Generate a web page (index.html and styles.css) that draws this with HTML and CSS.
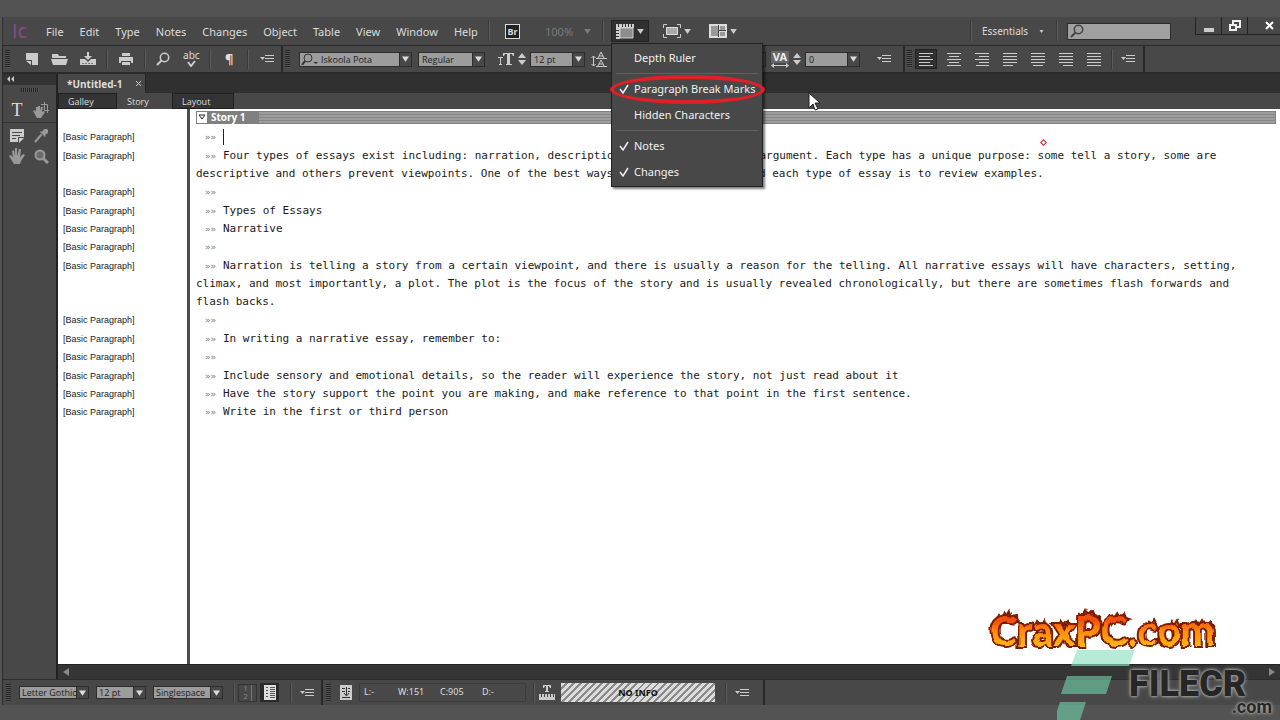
FILE: index.html
```html
<!DOCTYPE html>
<html lang="en">
<head>
    <meta charset="UTF-8">
    <meta name="viewport" content="width=device-width, initial-scale=1.0">
    <title>Untitled-1</title>
    <link rel="stylesheet" href="styles.css">
</head>
<body>
    <!-- shared icons -->
    <svg width="0" height="0" class="defs">
        <symbol id="down" viewBox="0 0 8 6"><path d="M0 0h8L4 6z"/></symbol>
        <symbol id="panel-menu" viewBox="0 0 14 10"><path d="M0 3h5L2.500 6z"/><path d="M5 1.500h9M5 4.500h9M5 7.500h9" stroke="currentColor" fill="none"/></symbol>
        <symbol id="glass" viewBox="0 0 14 14"><circle cx="8.500" cy="5.500" r="4.200" fill="none" stroke="currentColor" stroke-width="1.500"/><path d="M5.500 8.500L1 13" stroke="currentColor" stroke-width="2"/></symbol>
        <symbol id="spin" viewBox="0 0 8 12"><path d="M0 5l4-5 4 5zM0 7h8l-4 5z"/></symbol>
        <symbol id="check" viewBox="0 0 10 10"><path d="M1 5l3 4 5-8" fill="none" stroke="currentColor" stroke-width="1.500"/></symbol>
    </svg>

    <header class="menubar">
        <span class="logo">Ic</span>
        <nav class="menus">
            <a href="#">File</a>
            <a href="#">Edit</a>
            <a href="#">Type</a>
            <a href="#">Notes</a>
            <a href="#">Changes</a>
            <a href="#">Object</a>
            <a href="#">Table</a>
            <a href="#">View</a>
            <a href="#">Window</a>
            <a href="#">Help</a>
        </nav>
        <i class="sep"></i>
        <button class="bridge">Br</button>
        <button class="zoom">100% <svg class="caret"><use href="#down"/></svg></button>
        <i class="sep"></i>
        <div class="view-options">
            <button class="view-btn open" aria-label="View options">
                <svg width="18" height="15"><path d="M4 4h13v10H4z" fill="#8d8d8d" stroke="#ccc"/><path d="M0 0h18v4H4v11H0z" fill="#d0d0d0"/><path d="M6.500 0v3M9.500 0v3M12.500 0v3M15.500 0v3M0 6.500h3M0 9.500h3M0 12.500h3M2.500 0v3" stroke="#333"/></svg>
                <svg class="caret"><use href="#down"/></svg>
            </button>
            <ul class="dropdown">
                <li>Depth Ruler</li>
                <li class="line"></li>
                <li class="marked"><svg class="check"><use href="#check"/></svg>Paragraph Break Marks</li>
                <li>Hidden Characters</li>
                <li class="line"></li>
                <li><svg class="check"><use href="#check"/></svg>Notes</li>
                <li><svg class="check"><use href="#check"/></svg>Changes</li>
            </ul>
        </div>
        <button class="view-btn" aria-label="Screen mode">
            <svg width="18" height="14"><path d="M3.500 3.500h11v7h-11z" fill="#aaa" stroke="#ddd"/><path d="M.5 4V.5H4M14 .5h3.500V4M17.500 10v3.500H14M4 13.500H.5V10" fill="none" stroke="#ccc"/></svg>
            <svg class="caret"><use href="#down"/></svg>
        </button>
        <button class="view-btn" aria-label="Arrange documents">
            <svg width="18" height="14"><path d="M0 0h18v14H0z" fill="#ddd"/><path d="M2 2h7v10H2zM11 2h5v4h-5zM11 8h5v4h-5z" fill="#999"/><path d="M9.500 1v12M10 6.500h7" stroke="#444"/></svg>
            <svg class="caret"><use href="#down"/></svg>
        </button>
        <div class="right">
            <i class="sep"></i>
            <button class="workspace">Essentials <svg class="caret small"><use href="#down"/></svg></button>
            <i class="sep"></i>
            <label class="search">
                <svg width="14" height="14"><use href="#glass"/></svg>
                <input type="text" aria-label="Search">
            </label>
            <div class="window-buttons">
                <button aria-label="Minimize"><svg width="10" height="12"><path d="M0 8h10v4H0z"/></svg></button>
                <button aria-label="Restore"><svg width="12" height="12" stroke="#eee" stroke-width="2"><path d="M4 4V1h7v6H8M1 5h6v5H1z" fill="none"/></svg></button>
                <button aria-label="Close" class="close"><svg width="9" height="9" stroke="#fff" stroke-width="2"><path d="M1 1l7 7M8 1L1 8"/></svg></button>
            </div>
        </div>
    </header>

    <div class="toolbar">
        <i class="grip"></i>
        <div class="tools">
            <button aria-label="New"><svg width="12" height="12"><path d="M0 0h12v12H6V7H0zM0 8h5v4z"/></svg></button>
            <button aria-label="Open"><svg width="17" height="12"><path d="M1 1h6l1 2h7v2H1zM0 6h17l-2 6H2z"/></svg></button>
            <button aria-label="Save"><svg width="16" height="14"><path d="M0 7h5l3 3 3-3h5v6H0zM7 0h2v4h3L8 8 4 4h3z"/><path d="M2 11.500h12" stroke="#777" stroke-dasharray="2 1"/></svg></button>
            <i class="sep"></i>
            <button aria-label="Print"><svg width="14" height="12"><path d="M3 0h8v3H3zM0 4h14v6h-2V8H2v2H0zM3 9h8v3H3z"/></svg></button>
            <i class="sep"></i>
            <button aria-label="Find"><svg width="14" height="14"><use href="#glass"/></svg></button>
            <button aria-label="Check spelling" class="abc">abc<svg width="9" height="7"><path d="M1 2l3 4 4-5" fill="none" stroke="#ccc" stroke-width="2"/></svg></button>
            <i class="sep"></i>
            <button aria-label="Show hidden characters" class="pilcrow">¶</button>
            <i class="sep"></i>
            <button aria-label="Options"><svg width="14" height="10"><use href="#panel-menu"/></svg></button>
        </div>
        <i class="edge"></i>
        <i class="grip"></i>
        <div class="type-tools">
            <label class="combo font"><svg class="lens" width="17" height="12"><circle cx="7" cy="5" r="4" fill="none" stroke="#333"/><path d="M4 8l-3 4" stroke="#333" stroke-width="2"/><path d="M12 9h5l-2 2z" fill="#333"/></svg><select aria-label="Font"><option>Iskoola Pota</option></select><span class="arrow"><svg><use href="#down"/></svg></span></label>
            <label class="combo weight"><select aria-label="Font style"><option>Regular</option></select><span class="arrow"><svg><use href="#down"/></svg></span></label>
            <svg class="type-icon" width="16" height="14"><path d="M5 1h11v3h-1l-1-2h-2v10h2v1h-6v-1h1V2H7L6 4H5zM0 5h5v1H3v6h1v1H1v-1h1V6H0z"/></svg>
            <svg class="spinner"><use href="#spin"/></svg>
            <label class="combo size"><select aria-label="Font size"><option>12 pt</option></select><span class="arrow"><svg><use href="#down"/></svg></span></label>
            <svg class="leading-icon" width="16" height="16" stroke="#ccc"><path d="M7 7l3-6 3 6M8 5h4M7 15l3-6 3 6M8 13h4M5 7.500h11M5 15.500h11M2.500 5v10M.5 7l2-2 2 2M.5 13l2 2 2-2" fill="none"/></svg>
            <svg class="spinner"><use href="#spin"/></svg>
            <label class="combo leading"><select aria-label="Leading"><option>14.4 pt</option></select><span class="arrow"><svg><use href="#down"/></svg></span></label>
            <span class="tracking-icon"><b>VA</b><svg width="18" height="5"><path d="M0 2.500L3 0v2h12V0l3 2.500L15 5V3H3v2z"/></svg></span>
            <svg class="spinner"><use href="#spin"/></svg>
            <label class="combo tracking"><select aria-label="Tracking"><option>0</option></select><span class="arrow"><svg><use href="#down"/></svg></span></label>
            <button aria-label="Options"><svg width="14" height="10"><use href="#panel-menu"/></svg></button>
        </div>
        <i class="edge"></i>
        <i class="grip"></i>
        <div class="align-tools">
            <button class="on" aria-label="Align left"><svg><path d="M0 .5h14M0 3.500h11M0 6.500h14M0 9.500h11M0 12.500h14"/></svg></button>
            <button aria-label="Align center"><svg><path d="M0 .5h14M2 3.500h10M0 6.500h14M2 9.500h10M0 12.500h14"/></svg></button>
            <button aria-label="Align right"><svg><path d="M0 .5h14M4 3.500h10M0 6.500h14M4 9.500h10M1 12.500h13"/></svg></button>
            <button aria-label="Justify left"><svg><path d="M0 .5h14M0 3.500h14M0 6.500h14M0 9.500h14M0 12.500h10"/></svg></button>
            <button aria-label="Justify center"><svg><path d="M0 .5h14M0 3.500h14M0 6.500h14M0 9.500h14M2 12.500h10"/></svg></button>
            <button aria-label="Justify right"><svg><path d="M0 .5h14M0 3.500h14M0 6.500h14M0 9.500h14M4 12.500h10"/></svg></button>
            <button aria-label="Justify all"><svg><path d="M0 .5h14M0 3.500h14M0 6.500h14M0 9.500h14M0 12.500h14"/></svg></button>
            <i class="sep"></i>
            <button class="opts" aria-label="Options"><svg class="pm"><use href="#panel-menu"/></svg></button>
        </div>
        <i class="edge"></i>
    </div>

    <div class="main">
        <aside class="toolbox">
            <div class="collapse"><svg width="8" height="6"><path d="M3 0v6L0 3zM7 0v6L4 3z"/></svg></div>
            <i class="grip-h"></i>
            <div class="tool-grid">
                <button class="type-tool" aria-label="Type">T</button>
                <button aria-label="Position"><svg width="16" height="16"><path d="M0 9l2-1 1 2V5h2v4V4h2v5l1-4h2l-1 5 2-1 1 1-4 6H4z" fill="#999"/><path d="M8 2.500h6.500V11M11.500 0v8.500H16" fill="none" stroke="#999"/></svg></button>
            </div>
            <div class="tool-grid">
                <button aria-label="Note"><svg width="14" height="14"><path d="M0 0h14v8H8v5H0zM9 9h5l-5 5z"/><path d="M2 3.500h10M2 6.500h8M2 9.500h4" stroke="#484848"/></svg></button>
                <button aria-label="Eyedropper"><svg width="14" height="14"><path d="M10 0h3l1 1v3l-3 2 1 1-1 1-5-5 1-1 1 1z" fill="#999"/><path d="M7.500 5.500L1 13" stroke="#999" stroke-width="2"/></svg></button>
                <button aria-label="Hand"><svg width="16" height="16"><path d="M0 8l2-1 2 3L3 3l2-1 1 6V0h2v8l2-7h2l-1 8 3-3 2 1-4 6-1 3H5z" fill="#999"/></svg></button>
                <button aria-label="Zoom"><svg width="15" height="15" stroke="#999"><circle cx="6" cy="6" r="4.500" stroke-width="2" fill="#6c6c6c"/><path d="M9 9l5 5" stroke-width="3"/></svg></button>
            </div>
        </aside>

        <section class="document">
            <div class="doc-tabs"><a href="#">*Untitled-1 <svg width="7" height="7" stroke="#ccc"><path d="M1 1l5 5M6 1L1 6"/></svg></a></div>
            <div class="view-tabs">
                <button>Galley</button>
                <button class="active">Story</button>
                <button>Layout</button>
            </div>
            <div class="editor">
                <div class="row head"><div class="style"></div><div class="story"><span class="fold"><svg width="8" height="7"><path d="M1 1h6L4 5z" fill="none" stroke="#222"/></svg></span><b>Story 1</b></div></div>
                <div class="row empty"><div class="style">[Basic Paragraph]</div><p><i class="mark">»»</i><i class="cursor"></i></p></div>
                <div class="row"><div class="style">[Basic Paragraph]</div><p><i class="mark">»»</i>Four types of essays exist including: narration, description, persuasion, and an argument. Each type has a unique purpose: some tell a story, some are<br>descriptive and others prevent viewpoints. One of the best ways to properly understand each type of essay is to review examples.<span class="note"></span></p></div>
                <div class="row empty"><div class="style">[Basic Paragraph]</div><p><i class="mark">»»</i></p></div>
                <div class="row"><div class="style">[Basic Paragraph]</div><p><i class="mark">»»</i>Types of Essays</p></div>
                <div class="row"><div class="style">[Basic Paragraph]</div><p><i class="mark">»»</i>Narrative</p></div>
                <div class="row empty"><div class="style">[Basic Paragraph]</div><p><i class="mark">»»</i></p></div>
                <div class="row"><div class="style">[Basic Paragraph]</div><p><i class="mark">»»</i>Narration is telling a story from a certain viewpoint, and there is usually a reason for the telling. All narrative essays will have characters, setting,<br>climax, and most importantly, a plot. The plot is the focus of the story and is usually revealed chronologically, but there are sometimes flash forwards and<br>flash backs.</p></div>
                <div class="row empty"><div class="style">[Basic Paragraph]</div><p><i class="mark">»»</i></p></div>
                <div class="row"><div class="style">[Basic Paragraph]</div><p><i class="mark">»»</i>In writing a narrative essay, remember to:</p></div>
                <div class="row empty"><div class="style">[Basic Paragraph]</div><p><i class="mark">»»</i></p></div>
                <div class="row"><div class="style">[Basic Paragraph]</div><p><i class="mark">»»</i>Include sensory and emotional details, so the reader will experience the story, not just read about it</p></div>
                <div class="row"><div class="style">[Basic Paragraph]</div><p><i class="mark">»»</i>Have the story support the point you are making, and make reference to that point in the first sentence.</p></div>
                <div class="row"><div class="style">[Basic Paragraph]</div><p><i class="mark">»»</i>Write in the first or third person</p></div>
                <div class="row rest"><div class="style"></div></div>
            </div>
            <div class="scrollbar">
                <svg width="6" height="8"><path d="M6 0v8L0 4z"/></svg>
                <span><svg width="6" height="8"><path d="M0 0v8l6-4z"/></svg></span>
            </div>
        </section>
    </div>

    <footer class="status">
        <i class="grip"></i>
        <div class="galley-tools">
            <label class="combo face"><select aria-label="Display font"><option>Letter Gothic Std</option></select><span class="arrow"><svg><use href="#down"/></svg></span></label>
            <label class="combo pts"><select aria-label="Display size"><option>12 pt</option></select><span class="arrow"><svg><use href="#down"/></svg></span></label>
            <label class="combo spacing"><select aria-label="Line spacing"><option>Singlespace</option></select><span class="arrow"><svg><use href="#down"/></svg></span></label>
            <i class="sep"></i>
            <button class="numbers" aria-label="Line numbers"><span>1<br>2</span></button>
            <button class="names" aria-label="Style names"><svg width="12" height="15"><path d="M0 0h12v15H0z" fill="#ddd"/><path d="M2 2.500h2M2 5.500h2M2 8.500h2M2 11.500h2M6 2.500h5M6 4.500h5M6 6.500h5M6 8.500h5M6 10.500h5M6 12.500h5" stroke="#555"/></svg></button>
            <i class="sep"></i>
            <button aria-label="Options"><svg width="14" height="10"><use href="#panel-menu"/></svg></button>
        </div>
        <i class="edge"></i>
        <i class="grip"></i>
        <div class="fit">
            <svg width="12" height="15"><path d="M0 0h12v15H0z" fill="#ccc"/><path d="M2 3.500h3M8 3.500h2M2 6.500h3M8 6.500h2M2 12.500h8M6.500 2v8M4 8l2.500 3L9 8" stroke="#333" fill="none"/></svg>
            <div class="counts"><span>L:-</span><span>W:151</span><span>C:905</span><span>D:-</span></div>
            <i class="sep"></i>
            <svg class="ruler" width="16" height="16"><path d="M4 0h8v3h-1l-1-2H9v5h1v1H6V6h1V1H6L5 3H4zM0 9h16v6H0z"/><path d="M2.500 9v3M5.500 9v3M8.500 9v3M11.500 9v3M14.500 9v3" stroke="#444"/></svg>
            <div class="info">NO INFO</div>
            <i class="sep"></i>
            <button aria-label="Options"><svg width="14" height="10"><use href="#panel-menu"/></svg></button>
        </div>
        <i class="edge"></i>
    </footer>

    <svg class="crax" width="250" height="54">
        <defs>
            <linearGradient id="fire" x1="0" y1="0" x2="0" y2="1"><stop offset="0.300" stop-color="#f2500f"/><stop offset="0.500" stop-color="#ff8a08"/><stop offset="0.900" stop-color="#ffc21a"/></linearGradient>
            <filter id="rough"><feTurbulence type="fractalNoise" baseFrequency="0.15 0.080" numOctaves="1" seed="4"/><feDisplacementMap in="SourceGraphic" scale="6" xChannelSelector="R" yChannelSelector="G"/></filter>
        </defs>
        <g filter="url(#rough)">
            <path d="M9 17l3-7 3 3 3-7 3 4 3-5 2 6 5-1 1 7zM50 21l2-5 3 3 3-5 2 6zM72 20l3-5 3 4 4-4 2 5zM91 16l2-8 4 3 3-6 3 5 4-4 2 5 4-1v7zM122 17l2-7 4 3 3-7 3 5 4-4 2 5 3 1zM160 21l3-6 3 4 3-5 3 6zM183 21l3-6 3 4 3-5 3 6zM207 21l3-6 3 4 4-5 3 5 4-4 3 5z" fill="#f2500f" stroke="#7e1b06" stroke-width="2"/>
            <text x="4" y="40">CraxPC.com</text>
        </g>
    </svg>
    <div class="filecr">
        <svg width="80" height="70"><path d="M20 0h58l-6 16H14z" fill="#8fe0c2" fill-opacity=".65"/><path d="M10 26h45l-6 18H4z" fill="#6fc7a5" fill-opacity=".65"/><path d="M3 52h26l-6 18H-3z" fill="#6fc7a5" fill-opacity=".65"/></svg>
        <div class="wordmark">FILECR<span>.com</span></div>
    </div>
    <svg class="pointer" width="12" height="19"><path d="M1 1v15l4-4 2 6 3-1-3-6h5z" fill="#fff" stroke="#222" stroke-width="1"/></svg>
</body>
</html>
```
FILE: styles.css
```css
*, *::before, *::after { box-sizing: border-box; }
body { margin: 0; padding: 17px 0 15px 2px; min-height: 100vh; display: flex; flex-direction: column; position: relative; overflow: hidden; background: #535353; color: #ddd; font-family: "Noto Sans", sans-serif; font-size: 11px; }
button { font: inherit; color: inherit; background: none; border: none; padding: 0; display: flex; align-items: center; justify-content: center; }
a { color: inherit; text-decoration: none; }
svg { fill: #ccc; color: #ccc; flex: none; display: block; }
i { font-style: normal; flex: none; }
p { margin: 0; }
.defs { position: absolute; }
.sep { width: 2px; height: 20px; background: #393939; border-right: 1px solid #5c5c5c; }
.edge { width: 2px; align-self: stretch; background: #282828; }
.grip { width: 5px; height: 18px; background: repeating-linear-gradient(#222 0 1px, #555 1px 2px); }
.caret { width: 7px; height: 5px; }
.caret.small { width: 5px; height: 3px; }

/* menu bar */
.menubar { height: 28px; display: flex; align-items: center; background: #484848; border-left: 1px solid #303030; }
.logo { width: 43px; padding-left: 9px; color: #8e4795; font-family: "Open Sans", sans-serif; font-size: 20px; line-height: 24px; }
.menus { display: flex; gap: 16px; width: 432px; margin-right: 10px; }
.bridge { width: 15px; height: 15px; margin: 0 25px 0 15px; border: 1px solid #ddd; background: #222; font-size: 9px; font-weight: bold; }
.zoom { width: 46px; justify-content: space-between; margin-right: 11px; color: #7b7b7b; }
.zoom .caret { fill: #7b7b7b; }
.view-options { position: relative; margin: 0 9px 0 7px; }
.view-btn { width: 38px; height: 22px; gap: 3px; margin-right: 8px; }
.view-options .view-btn { margin: 0; }
.view-btn.open { background: #303030; border: 1px solid #242424; }
.dropdown { position: absolute; z-index: 5; left: 0; top: 23px; width: 152px; margin: 0; padding: 1px 0; list-style: none; background: #484848; border: 1px solid #222; box-shadow: 2px 2px 2px rgba(0, 0, 0, 0.5); color: #f0f0f0; }
.dropdown li { height: 26px; line-height: 26px; padding-left: 22px; white-space: nowrap; position: relative; }
.dropdown .line { height: 5px; margin: 0 4px; }
.dropdown .line::before { content: ""; position: absolute; left: 0; right: 0; top: 2px; height: 1px; background: #606060; }
.dropdown .check { position: absolute; left: 7px; top: 8px; width: 10px; height: 10px; color: #eee; }
.marked::after { content: ""; position: absolute; left: -2px; top: -1px; width: 155px; height: 29px; border: 4px solid #e01f26; border-radius: 50%; }
.right { margin-left: auto; height: 28px; display: flex; align-items: center; }
.workspace { width: 62px; justify-content: space-between; margin: 0 12px 0 10px; font-size: 10px; }
.search { width: 104px; height: 17px; margin: 0 24px 0 9px; padding: 0 2px; display: flex; align-items: center; background: #a0a0a0; border: 1px solid #2c2c2c; }
.search svg { color: #444; }
.search input { width: 100%; min-width: 0; border: none; background: none; outline: none; }
.window-buttons { display: flex; align-self: flex-start; height: 18px; border: 1px solid #222; border-top: none; border-right: none; }
.window-buttons button { width: 26px; border-right: 1px solid #222; }
.window-buttons .close { width: 32px; padding-left: 10px; border-right: none; }

/* control bar */
.toolbar { height: 29px; display: flex; align-items: center; background: #484848; border: 1px solid #2a2a2a; border-right: none; border-bottom-width: 2px; }
.toolbar .grip { margin: 0 3px 0 2px; }
.tools { display: flex; align-items: center; padding-left: 5px; width: 268px; }
.tools button { width: 28px; height: 24px; }
.tools .sep { margin: 0 4px; }
.tools .abc { flex-direction: column; font-size: 10px; line-height: 9px; }
.pilcrow { font-size: 13px; font-weight: bold; }
.type-tools { display: flex; align-items: center; width: 610px; padding-left: 6px; }
.combo { display: flex; height: 15px; align-items: stretch; color: #1c1c1c; background: #9c9c9c; border: 1px solid #2c2c2c; font-family: "Open Sans", sans-serif; font-size: 9px; }
.combo select { appearance: none; flex: 1; min-width: 0; border: none; padding: 0 0 0 3px; background: none; color: inherit; font: inherit; line-height: 13px; outline: none; }
.combo .arrow { width: 12px; display: flex; align-items: center; justify-content: center; background: #484848; border-left: 1px solid #2c2c2c; }
.combo .arrow svg { width: 7px; height: 6px; fill: #ddd; }
.combo .lens { margin-left: 1px; }
.font { width: 113px; margin-right: 6px; }
.weight { width: 67px; margin-right: 13px; }
.spinner { width: 8px; height: 12px; margin: 0 4px; }
.size { width: 55px; margin-right: 6px; }
.leading { width: 143px; margin-right: 5px; }
.tracking-icon { width: 18px; line-height: 12px; }
.tracking-icon b { display: block; background: #666; color: #eee; text-align: center; }
.tracking { width: 55px; margin-right: 17px; }
.type-tools button { width: 14px; }
.align-tools { display: flex; align-items: center; }
.align-tools button { width: 22px; height: 20px; margin-right: 6px; }
.align-tools .on { background: #303030; border: 1px solid #222; }
.align-tools svg { width: 14px; height: 13px; stroke: #ccc; }
.align-tools .sep { margin-right: 4px; }
.align-tools .opts { margin-right: 4px; }
.align-tools .pm { height: 10px; stroke: none; }

/* work area */
.main { flex: 1; display: flex; }
.toolbox { width: 56px; background: #484848; border-left: 1px solid #2c2c2c; border-right: 2px solid #222; }
.collapse { height: 11px; padding: 2px 4px; background: #333; }
.grip-h { display: block; width: 18px; height: 4px; margin: 3px auto 6px; background: repeating-linear-gradient(90deg, #222 0 1px, #555 1px 2px); }
.tool-grid { display: grid; grid-template-columns: 24px 24px; grid-auto-rows: 20px; padding: 2px; border-bottom: 1px solid #333; }
.tool-grid:last-child { padding-top: 3px; border: none; }
.type-tool { font-family: "Liberation Serif", serif; font-size: 18px; }
.document { flex: 1; min-width: 0; display: flex; flex-direction: column; }
.doc-tabs { height: 19px; display: flex; background: #303030; }
.doc-tabs a { width: 88px; padding-left: 9px; display: flex; align-items: center; gap: 12px; white-space: nowrap; background: #484848; border-right: 1px solid #222; font-family: "Open Sans", sans-serif; font-size: 10px; font-weight: bold; }
.view-tabs { height: 16px; display: flex; background: #484848; }
.view-tabs button { width: 59px; padding-left: 9px; justify-content: flex-start; background: #343434; border: 1px solid #202020; font-family: "Open Sans", sans-serif; font-size: 9px; }
.view-tabs .active { width: 55px; background: #484848; border-color: #484848; }
.view-tabs button:last-child { width: 62px; }
.editor { flex: 1; display: flex; flex-direction: column; background: #fff; color: #1a1a1a; }
.row { display: flex; min-height: 18px; line-height: 18px; }
.row.empty { min-height: 19px; }
.row .style { width: 132px; flex: none; padding: 1px 0 0 5px; border-right: 3px solid #4d4d4d; font-family: "Liberation Sans", sans-serif; font-size: 9px; line-height: 17px; }
.row p { flex: 1; padding-left: 6px; position: relative; white-space: nowrap; font-family: "DejaVu Sans Mono", monospace; font-size: 11px; }
.row.rest { flex: 1; }
.row.head { height: 19px; }
.story { flex: 1; display: flex; height: 13px; margin: 2px 4px 0 6px; line-height: 13px; font-family: "Open Sans", sans-serif; font-size: 10px; color: #fff; background: repeating-linear-gradient(#9d9d9d 0 2px, #868686 2px 3px); border: 1px solid #808080; }
.story b { width: 52px; padding-left: 4px; line-height: 11px; background: #808080; }
.fold { width: 10px; padding: 2px 1px; background: #fff; }
.mark { display: inline-block; width: 27px; padding-left: 9px; color: #777; font-size: 9px; line-height: 12px; }
.cursor { display: inline-block; width: 1px; height: 16px; background: #222; vertical-align: middle; }
.note { position: absolute; left: 851px; top: -7px; width: 5px; height: 5px; border: 1px solid #c22; transform: rotate(45deg); }
.scrollbar { height: 15px; padding: 0 5px; display: flex; align-items: center; justify-content: space-between; background: #353535; border-top: 1px solid #222; }
.scrollbar svg { fill: #888; }

/* status bar */
.status { height: 26px; display: flex; align-items: center; background: #484848; border-top: 1px solid #2c2c2c; border-left: 1px solid #2c2c2c; }
.status .grip { margin: 0 3px 0 3px; }
.galley-tools { display: flex; align-items: center; width: 307px; padding-left: 5px; }
.status .combo { height: 13px; }
.status .combo select { padding-left: 2px; line-height: 11px; }
.face { width: 70px; margin-right: 7px; }
.pts { width: 50px; margin-right: 7px; }
.spacing { width: 70px; margin-right: 10px; }
.numbers { width: 19px; height: 18px; margin: 0 3px; border: 1px solid #333; color: #888; font-size: 7px; line-height: 8px; }
.numbers span { padding-right: 3px; border-right: 1px solid #777; }
.names { width: 19px; height: 19px; margin-right: 11px; background: #2a2a2a; }
.galley-tools > button:last-child { margin-left: 8px; }
.fit { display: flex; align-items: center; width: 429px; padding-left: 6px; }
.counts { display: flex; width: 167px; height: 19px; margin: 0 7px; padding-left: 4px; line-height: 15px; border: 1px solid #3c3c3c; font-size: 9px; }
.counts span { width: 42px; }
.counts span:first-child { width: 34px; }
.ruler { margin: 0 6px 0 4px; }
.info { width: 154px; height: 19px; margin-right: 10px; line-height: 20px; text-align: center; background: repeating-linear-gradient(135deg, #ddd 0 3px, #8a8a8a 3px 5px); color: #111; font-size: 9px; font-weight: bold; }
.fit > button { margin-left: 8px; }

/* logos lying over the window */
.crax { position: absolute; right: 44px; bottom: 60px; overflow: visible; font-family: "Lato", sans-serif; font-size: 41px; font-weight: 900; }
.crax text { fill: url(#fire); stroke: #7e1b06; stroke-width: 4px; paint-order: stroke; }
.filecr { position: absolute; right: 8px; bottom: 0; display: flex; }
.wordmark { width: 143px; position: relative; margin-left: -8px; padding-top: 15px; color: #262626; font-family: "Roboto", sans-serif; font-size: 36px; font-weight: 900; line-height: 38px; text-shadow: 0 0 2px #aaa, 0 0 3px #aaa, 0 0 5px #999; }
.wordmark span { position: absolute; right: 0; top: 47px; font-size: 18px; font-weight: bold; line-height: 20px; }
.pointer { position: absolute; left: 808px; top: 92px; }
```
